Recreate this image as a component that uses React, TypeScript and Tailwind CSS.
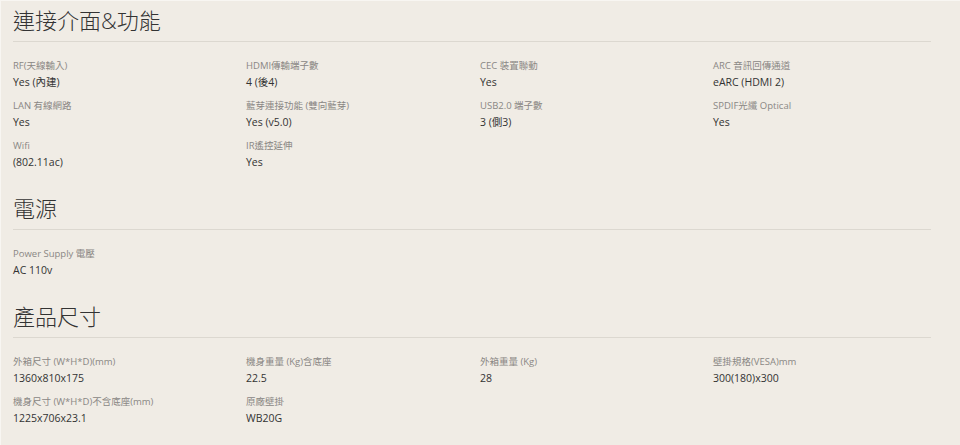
import React from "react";

type Item = { label: string; value: string };

const sections: { title: string; items: Item[] }[] = [
  {
    title: "連接介面&功能",
    items: [
      { label: "RF(天線輸入)", value: "Yes (內建)" },
      { label: "HDMI傳輸端子數", value: "4 (後4)" },
      { label: "CEC 裝置聯動", value: "Yes" },
      { label: "ARC 音訊回傳通道", value: "eARC (HDMI 2)" },
      { label: "LAN 有線網路", value: "Yes" },
      { label: "藍芽連接功能 (雙向藍芽)", value: "Yes (v5.0)" },
      { label: "USB2.0 端子數", value: "3 (側3)" },
      { label: "SPDIF光纖 Optical", value: "Yes" },
      { label: "Wifi", value: "(802.11ac)" },
      { label: "IR遙控延伸", value: "Yes" },
    ],
  },
  {
    title: "電源",
    items: [{ label: "Power Supply 電壓", value: "AC 110v" }],
  },
  {
    title: "產品尺寸",
    items: [
      { label: "外箱尺寸 (W*H*D)(mm)", value: "1360x810x175" },
      { label: "機身重量 (Kg)含底座", value: "22.5" },
      { label: "外箱重量 (Kg)", value: "28" },
      { label: "壁掛規格(VESA)mm", value: "300(180)x300" },
      { label: "機身尺寸 (W*H*D)不含底座(mm)", value: "1225x706x23.1" },
      { label: "原廠壁掛", value: "WB20G" },
    ],
  },
];

export default function App() {
  return (
    <div
      className="w-[960px] h-[445px] overflow-hidden bg-[#f0ece5] border-t border-l border-[#f8f6f2]"
      style={{ fontFamily: '"Open Sans", "Noto Sans CJK TC", sans-serif' }}
    >
      <div className="pl-[12px] w-[930px]">
        {sections.map((s, i) => (
          <section key={s.title} className={i === 0 ? "pt-[4px]" : "pt-[14px]"}>
            <h2 className="text-[22px] leading-[30px] text-[#333] font-light pb-[6px] border-b border-[#dcd8d0]">
              {s.title}
            </h2>
            <div className="grid grid-cols-[233px_234px_233px_1fr] pt-[17px]">
              {s.items.map((it) => (
                <div key={it.label} className="h-[40px]">
                  <div className="text-[9.5px] leading-[14px] text-[#8a8784] whitespace-nowrap">
                    {it.label}
                  </div>
                  <div className="text-[10.5px] leading-[18px] text-[#333] whitespace-nowrap">
                    {it.value}
                  </div>
                </div>
              ))}
            </div>
          </section>
        ))}
      </div>
    </div>
  );
}
